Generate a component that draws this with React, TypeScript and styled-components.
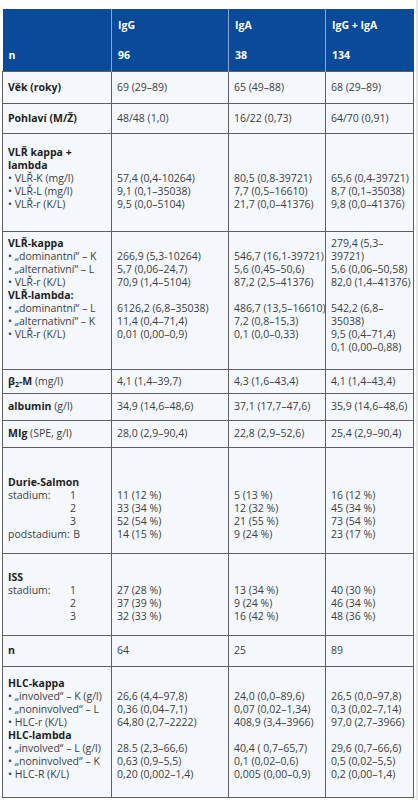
import React from "react";
import styled, { createGlobalStyle } from "styled-components";

const GlobalStyle = createGlobalStyle`
  html, body {
    margin: 0;
    padding: 0;
    background: #ffffff;
  }
  body {
    font-family: "Open Sans", "Liberation Sans", sans-serif;
  }
`;

const Page = styled.div`
  width: 418px;
  min-height: 800px;
  padding: 9px 0 0 2px;
  box-sizing: border-box;
  border-right: 2px solid #e4e6ea;
`;

const Table = styled.table`
  width: 411px;
  border-collapse: collapse;
  table-layout: fixed;
  font-size: 10.5px;
  line-height: 13px;
  color: #3d3d3d;
`;

const HeadRow = styled.tr<{ $h: number }>`
  height: ${(p) => p.$h}px;
  background: #0a4a9a;
  & + & > th {
    border-top: 1px solid #7f9fcb;
  }
`;

const HeadCell = styled.th`
  padding: 0 6px;
  text-align: left;
  vertical-align: middle;
  font-weight: 700;
  color: #ffffff;
  border-left: 1px solid #8aa6cf;
  &:first-child {
    border-left: none;
  }
`;

const BodyRow = styled.tr<{ $h: number; $pt?: number }>`
  height: ${(p) => p.$h}px;
  & > td {
    vertical-align: ${(p) => (p.$pt === undefined ? "middle" : "top")};
    padding-top: ${(p) => p.$pt ?? 0}px;
  }
`;

const Cell = styled.td`
  padding: 0 5px;
  background: #f4f8fd;
  border: 1px solid #5e5e5e;
  white-space: nowrap;
  overflow: hidden;
`;

const Line = styled.div`
  height: 13px;
`;

const Strong = styled.span`
  font-weight: 700;
  color: #1e1e1e;
`;

const Sub = styled.sub`
  font-size: 7px;
  vertical-align: -2px;
`;

const StageLine = styled.div`
  display: flex;
  justify-content: space-between;
  gap: 3px;
  width: 72px;
`;

const StageNum = styled.span<{ $pr: number }>`
  padding-right: ${(p) => p.$pr}px;
`;

type Cellish = React.ReactNode;

interface RowSpec {
  h: number;
  pt?: number;
  label: Cellish[];
  values: Cellish[][];
}

const B = "\u00a0";

const Stage = ({ name, num }: { name?: string; num: string }) => (
  <StageLine>
    <span>{name}</span>
    <StageNum $pr={num === "B" ? 0 : 4}>{num}</StageNum>
  </StageLine>
);

const rows: RowSpec[] = [
  {
    h: 32,
    label: [<Strong>Věk (roky)</Strong>],
    values: [["69 (29–89)"], ["65 (49–88)"], ["68 (29–89)"]],
  },
  {
    h: 30,
    label: [<Strong>Pohlaví (M/Ž)</Strong>],
    values: [["48/48 (1,0)"], ["16/22 (0,73)"], ["64/70 (0,91)"]],
  },
  {
    h: 98,
    pt: 12,
    label: [
      <Strong>VLŘ kappa +</Strong>,
      <Strong>lambda</Strong>,
      "• VLŘ-K (mg/l)",
      "• VLŘ-L (mg/l)",
      "• VLŘ-r (K/L)",
    ],
    values: [
      [B, B, "57,4 (0,4-10264)", "9,1 (0,1–35038)", "9,5 (0,0–5104)"],
      [B, B, "80,5 (0,8-39721)", "7,7 (0,5–16610)", "21,7 (0,0–41376)"],
      [B, B, "65,6 (0,4-39721)", "8,7 (0,1–35038)", "9,8 (0,0–41376)"],
    ],
  },
  {
    h: 138,
    pt: 5,
    label: [
      <Strong>VLŘ-kappa</Strong>,
      "• „dominantní“ – K",
      "• „alternativní“ – L",
      "• VLŘ-r (K/L)",
      <Strong>VLŘ-lambda:</Strong>,
      "• „dominantní“ – L",
      "• „alternativní“ – K",
      "• VLŘ-r (K/L)",
    ],
    values: [
      [
        B,
        "266,9 (5,3-10264)",
        "5,7 (0,06–24,7)",
        "70,9 (1,4–5104)",
        B,
        "6126,2 (6,8–35038)",
        "11,4 (0,4–71,4)",
        "0,01 (0,00–0,9)",
      ],
      [
        B,
        "546,7 (16,1-39721)",
        "5,6 (0,45–50,6)",
        "87,2 (2,5–41376)",
        B,
        "486,7 (13,5–16610)",
        "7,2 (0,8–15,3)",
        "0,1 (0,0–0,33)",
      ],
      [
        "279,4 (5,3–",
        "39721)",
        "5,6 (0,06–50,58)",
        "82,0 (1,4–41376)",
        B,
        "542,2 (6,8–",
        "35038)",
        "9,5 (0,4–71,4)",
        "0,1 (0,00–0,88)",
      ],
    ],
  },
  {
    h: 24,
    label: [
      <>
        <Strong>
          β<Sub>2</Sub>-M
        </Strong>{" "}
        (mg/l)
      </>,
    ],
    values: [["4,1 (1,4–39,7)"], ["4,3 (1,6–43,4)"], ["4,1 (1,4–43,4)"]],
  },
  {
    h: 27,
    label: [
      <>
        <Strong>albumin</Strong> (g/l)
      </>,
    ],
    values: [["34,9 (14,6–48,6)"], ["37,1 (17,7–47,6)"], ["35,9 (14,6–48,6)"]],
  },
  {
    h: 27,
    label: [
      <>
        <Strong>MIg</Strong> (SPE, g/l)
      </>,
    ],
    values: [["28,0 (2,9–90,4)"], ["22,8 (2,9–52,6)"], ["25,4 (2,9–90,4)"]],
  },
  {
    h: 106,
    pt: 28,
    label: [
      <Strong>Durie-Salmon</Strong>,
      <Stage name="stadium:" num="1" />,
      <Stage num="2" />,
      <Stage num="3" />,
      <Stage name="podstadium:" num="B" />,
    ],
    values: [
      [B, "11 (12 %)", "33 (34 %)", "52 (54 %)", "14 (15 %)"],
      [B, "5 (13 %)", "12 (32 %)", "21 (55 %)", "9 (24 %)"],
      [B, "16 (12 %)", "45 (34 %)", "73 (54 %)", "23 (17 %)"],
    ],
  },
  {
    h: 82,
    pt: 17,
    label: [
      <Strong>ISS</Strong>,
      <Stage name="stadium:" num="1" />,
      <Stage num="2" />,
      <Stage num="3" />,
    ],
    values: [
      [B, "27 (28 %)", "37 (39 %)", "32 (33 %)"],
      [B, "13 (34 %)", "9 (24 %)", "16 (42 %)"],
      [B, "40 (30 %)", "46 (34 %)", "48 (36 %)"],
    ],
  },
  {
    h: 31,
    label: [<Strong>n</Strong>],
    values: [["64"], ["25"], ["89"]],
  },
  {
    h: 131,
    pt: 10,
    label: [
      <Strong>HLC-kappa</Strong>,
      "• „involved“ – K (g/l)",
      "• „noninvolved“ – L",
      "• HLC-r (K/L)",
      <Strong>HLC-lambda</Strong>,
      "• „involved“ – L (g/l)",
      "• „noninvolved“ – K",
      "• HLC-R (K/L)",
    ],
    values: [
      [
        B,
        "26,6 (4,4–97,8)",
        "0,36 (0,04–7,1)",
        "64,80 (2,7–2222)",
        B,
        "28.5 (2,3–66,6)",
        "0,63 (0,9–5,5)",
        "0,20 (0,002–1,4)",
      ],
      [
        B,
        "24,0 (0,0–89,6)",
        "0,07 (0,02–1,34)",
        "408,9 (3,4–3966)",
        B,
        "40,4 ( 0,7–65,7)",
        "0,1 (0,02–0,6)",
        "0,005 (0,00–0,9)",
      ],
      [
        B,
        "26,5 (0,0–97,8)",
        "0,3 (0,02–7,14)",
        "97,0 (2,7–3966)",
        B,
        "29,6 (0,7–66,6)",
        "0,5 (0,02–5,5)",
        "0,2 (0,00–1,4)",
      ],
    ],
  },
];

const Lines = ({ items }: { items: Cellish[] }) => (
  <>
    {items.map((item, i) => (
      <Line key={i}>{item}</Line>
    ))}
  </>
);

export default function App() {
  return (
    <>
      <GlobalStyle />
      <Page>
        <Table>
          <colgroup>
            <col style={{ width: 109 }} />
            <col style={{ width: 117 }} />
            <col style={{ width: 97 }} />
            <col style={{ width: 88 }} />
          </colgroup>
          <thead>
            <HeadRow $h={32}>
              <HeadCell />
              <HeadCell>IgG</HeadCell>
              <HeadCell>IgA</HeadCell>
              <HeadCell>IgG + IgA</HeadCell>
            </HeadRow>
            <HeadRow $h={30}>
              <HeadCell>n</HeadCell>
              <HeadCell>96</HeadCell>
              <HeadCell>38</HeadCell>
              <HeadCell>134</HeadCell>
            </HeadRow>
          </thead>
          <tbody>
            {rows.map((row, i) => (
              <BodyRow key={i} $h={row.h} $pt={row.pt}>
                <Cell>
                  <Lines items={row.label} />
                </Cell>
                {row.values.map((v, j) => (
                  <Cell key={j}>
                    <Lines items={v} />
                  </Cell>
                ))}
              </BodyRow>
            ))}
          </tbody>
        </Table>
      </Page>
    </>
  );
}
